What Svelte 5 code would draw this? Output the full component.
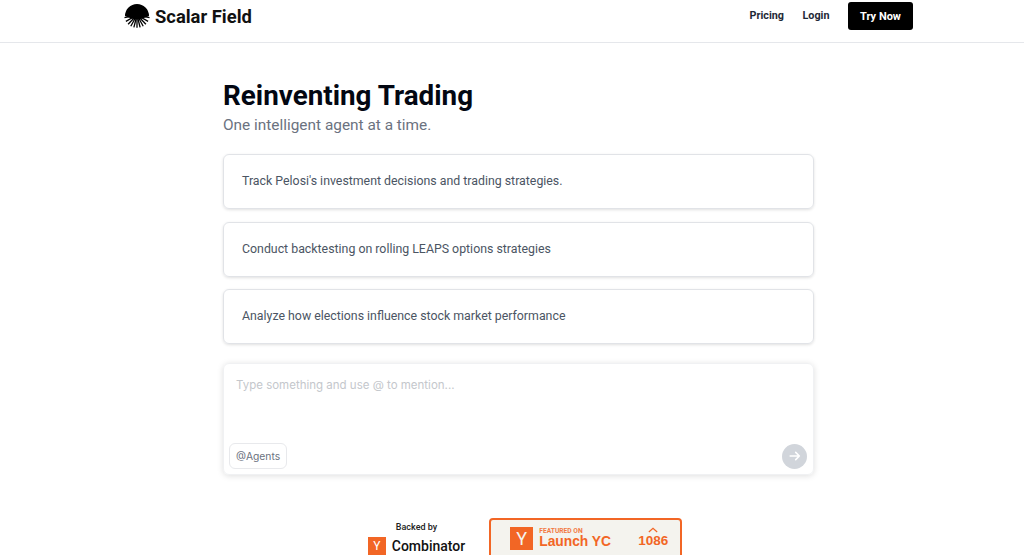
<script>
  let prompts = [
    "Track Pelosi's investment decisions and trading strategies.",
    "Conduct backtesting on rolling LEAPS options strategies",
    "Analyze how elections influence stock market performance"
  ];

  // rays under the logo dome
  let rays = [-78, -60, -44, -29, -14, 0, 14, 29, 44, 60, 78];
</script>

<div class="page">
  <header class="navbar">
    <div class="navbar-inner">
      <div class="brand">
        <svg class="logo" viewBox="0 0 26 24" width="26" height="24">
          <path d="M1 12 A12 12 0 0 1 25 12 C21 13.500 17 15.500 13 15.500 C9 15.500 5 13.500 1 12 Z" fill="#000" />
          {#each rays as r}
            <line x1="13" y1="11" x2="13" y2="23.800" stroke="#000" stroke-width="1.300" transform="rotate({r} 13 11)" />
          {/each}
        </svg>
        <span class="brand-name">Scalar Field</span>
      </div>
      <nav class="links">
        <span class="link">Pricing</span>
        <span class="link">Login</span>
        <span class="try">Try Now</span>
      </nav>
    </div>
  </header>

  <main class="content">
    <h1>Reinventing Trading</h1>
    <p class="sub">One intelligent agent at a time.</p>

    <div class="prompts">
      {#each prompts as text}
        <div class="prompt">{text}</div>
      {/each}
    </div>

    <div class="composer">
      <div class="placeholder">Type something and use @ to mention...</div>
      <div class="composer-foot">
        <span class="agents">@Agents</span>
        <span class="send">
          <svg viewBox="0 0 16 16" width="14" height="14" fill="none" stroke="#fff" stroke-width="1.800" stroke-linecap="round" stroke-linejoin="round">
            <path d="M2.500 8 H13 M8.800 3.800 L13 8 L8.800 12.200" />
          </svg>
        </span>
      </div>
    </div>

    <div class="badges">
      <div class="backed">
        <div class="backed-label">Backed by</div>
        <div class="yc">
          <span class="yc-mark">Y</span>
          <span class="yc-name">Combinator</span>
        </div>
      </div>
      <div class="launch">
        <span class="launch-mark">Y</span>
        <div class="launch-text">
          <span class="featured">FEATURED ON</span>
          <span class="launch-name">Launch YC</span>
        </div>
        <div class="votes">
          <svg viewBox="0 0 12 6" width="10" height="6" fill="none" stroke="#f26625" stroke-width="1.500">
            <path d="M1 5.500 L6 1 L11 5.500" />
          </svg>
          <span class="count">1086</span>
        </div>
      </div>
    </div>
  </main>
</div>

<style>
  :global(body) {
    margin: 0;
    background: #fff;
  }

  .page {
    height: 555px;
    overflow: hidden;
    font-family: Roboto, "Liberation Sans", sans-serif;
    color: #000;
  }

  .navbar {
    height: 42px;
    border-bottom: 1px solid #e5e7eb;
  }

  .navbar-inner {
    width: 789px;
    height: 30px;
    margin-left: 124px;
    padding: 1px 0 0;
    display: flex;
    align-items: center;
    justify-content: space-between;
  }

  .brand {
    display: flex;
    align-items: center;
    gap: 5px;
  }

  .logo {
    display: block;
  }

  .brand-name {
    font-size: 18.400px;
    font-weight: 700;
    color: #111;
  }

  .links {
    display: flex;
    align-items: center;
  }

  .link {
    font-size: 10.800px;
    font-weight: 700;
    color: #1f2937;
    margin-right: 18.500px;
    padding-bottom: 1px;
  }

  .try {
    width: 65px;
    height: 28px;
    display: flex;
    align-items: center;
    justify-content: center;
    background: #000;
    color: #fff;
    font-size: 11px;
    font-weight: 700;
    border-radius: 3px;
  }

  .content {
    width: 591px;
    margin-left: 223px;
    padding-top: 37px;
  }

  h1 {
    margin: 0;
    font-size: 27.800px;
    line-height: 32px;
    font-weight: 700;
    color: #030712;
  }

  .sub {
    margin: 3px 0 0;
    font-size: 15.400px;
    line-height: 20px;
    color: #6b7280;
  }

  .prompts {
    margin-top: 19px;
    display: flex;
    flex-direction: column;
    gap: 12.500px;
  }

  .prompt {
    height: 55px;
    box-sizing: border-box;
    padding: 0 18px 1px;
    display: flex;
    align-items: center;
    border: 1px solid #e1e3e7;
    border-radius: 6px;
    box-shadow: 0 1px 3px rgba(0, 0, 0, 0.12);
    font-size: 12.350px;
    color: #4b5563;
  }

  .composer {
    margin-top: 19px;
    height: 112px;
    box-sizing: border-box;
    padding: 14px 6px 5px 5px;
    display: flex;
    flex-direction: column;
    justify-content: space-between;
    border-radius: 6px;
    border: 1px solid #f0f1f3;
    box-shadow: 0 1px 6px rgba(0, 0, 0, 0.13);
  }

  .placeholder {
    padding-left: 7px;
    font-family: Inter, Roboto, sans-serif;
    font-size: 11.500px;
    line-height: 14px;
    color: #c4c7cc;
  }

  .composer-foot {
    display: flex;
    align-items: center;
    justify-content: space-between;
  }

  .agents {
    box-sizing: border-box;
    height: 26px;
    padding: 0 6px 1px;
    display: flex;
    align-items: center;
    border: 1px solid #e8e9ec;
    border-radius: 6px;
    font-family: Inter, Roboto, sans-serif;
    font-size: 10.300px;
    color: #6b7280;
  }

  .send {
    width: 25px;
    height: 25px;
    display: flex;
    align-items: center;
    justify-content: center;
    border-radius: 50%;
    background: #d1d5db;
  }

  .badges {
    margin-top: 43px;
    padding-left: 13px;
    display: flex;
    justify-content: center;
    align-items: flex-start;
    gap: 24px;
  }

  .backed {
    margin-top: 3px;
    display: flex;
    flex-direction: column;
    align-items: center;
  }

  .backed-label {
    font-size: 9px;
    line-height: 12px;
    font-weight: 500;
    color: #222;
  }

  .yc {
    margin-top: 4px;
    display: flex;
    align-items: center;
    gap: 6px;
  }

  .yc-mark {
    width: 18px;
    height: 18px;
    display: flex;
    align-items: center;
    justify-content: center;
    background: #f26625;
    color: #fff;
    font-size: 12px;
  }

  .yc-name {
    font-size: 14px;
    font-weight: 500;
    color: #111;
  }

  .launch {
    box-sizing: border-box;
    width: 193px;
    height: 60px;
    padding: 7px 12px 0 19px;
    display: flex;
    align-items: flex-start;
    background: #f4f3ee;
    border: 2px solid #f26625;
    border-radius: 4px;
    color: #f26625;
  }

  .launch-mark {
    width: 23px;
    height: 23px;
    display: flex;
    align-items: center;
    justify-content: center;
    background: #f26625;
    color: #f4f3ee;
    font-size: 18px;
    font-weight: 400;
  }

  .launch-text {
    margin-left: 6px;
    display: flex;
    flex-direction: column;
  }

  .featured {
    font-size: 6.700px;
    line-height: 7px;
    font-weight: 700;
    margin-top: 1px;
    opacity: 0.85;
  }

  .launch-name {
    font-size: 13.800px;
    line-height: 14px;
    font-weight: 700;
    font-family: "Liberation Sans", sans-serif;
  }

  .votes {
    margin-left: auto;
    display: flex;
    flex-direction: column;
    align-items: center;
  }

  .count {
    font-size: 13.500px;
    line-height: 16px;
    font-weight: 700;
    font-family: "Liberation Sans", sans-serif;
  }
</style>
